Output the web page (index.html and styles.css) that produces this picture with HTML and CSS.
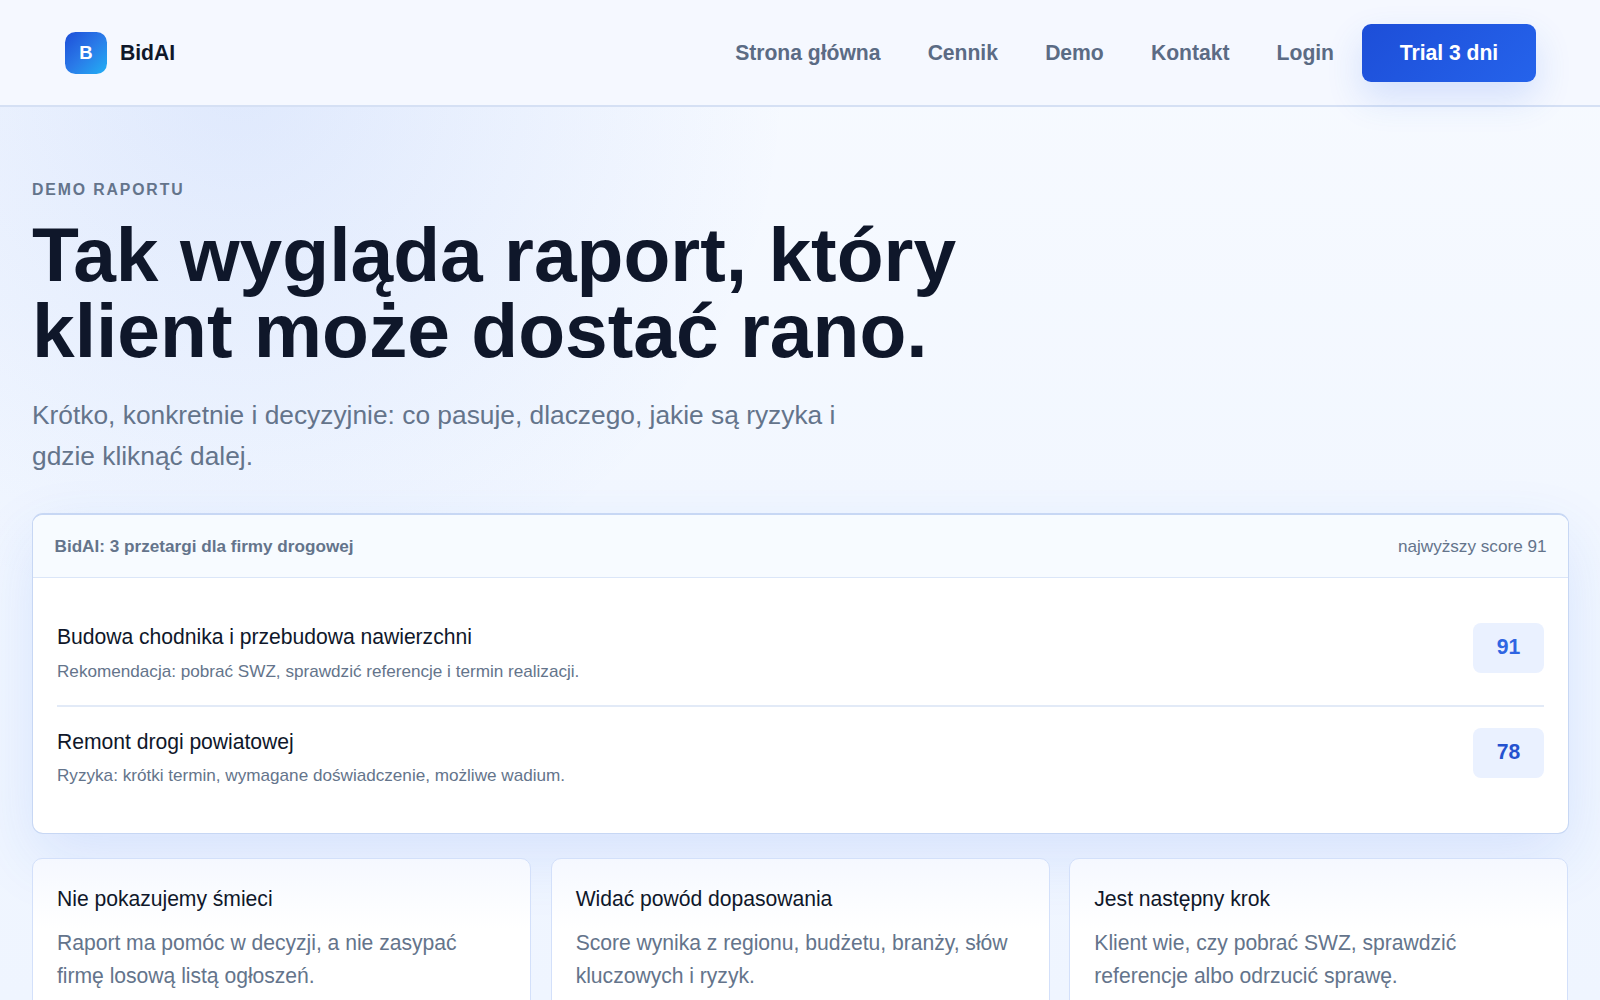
FILE: index.html
```html
<!DOCTYPE html>
<html lang="pl">
<head>
<meta charset="utf-8">
<title>BidAI – Demo raportu</title>
<link rel="stylesheet" href="styles.css">
</head>
<body>
<header class="topbar">
  <a class="brand"><span class="brand-mark">B</span><span>BidAI</span></a>
  <nav class="nav">
    <div class="nav-links">
      <a>Strona główna</a>
      <a>Cennik</a>
      <a>Demo</a>
      <a>Kontakt</a>
      <a>Login</a>
    </div>
    <a class="button">Trial 3 dni</a>
  </nav>
</header>
<main class="page">
  <section class="hero">
    <p class="eyebrow">DEMO RAPORTU</p>
    <h1>Tak wygląda raport, który klient może dostać rano.</h1>
    <p class="lead">Krótko, konkretnie i decyzyjnie: co pasuje, dlaczego, jakie są ryzyka i gdzie kliknąć dalej.</p>
  </section>
  <section class="report">
    <div class="report-head">
      <strong>BidAI: 3 przetargi dla firmy drogowej</strong>
      <span>najwyższy score 91</span>
    </div>
    <div class="report-body">
      <div class="row">
        <div>
          <h3>Budowa chodnika i przebudowa nawierzchni</h3>
          <p>Rekomendacja: pobrać SWZ, sprawdzić referencje i termin realizacji.</p>
        </div>
        <span class="score">91</span>
      </div>
      <div class="row">
        <div>
          <h3>Remont drogi powiatowej</h3>
          <p>Ryzyka: krótki termin, wymagane doświadczenie, możliwe wadium.</p>
        </div>
        <span class="score score-mid">78</span>
      </div>
    </div>
  </section>
  <section class="cards">
    <article class="card">
      <h3>Nie pokazujemy śmieci</h3>
      <p>Raport ma pomóc w decyzji, a nie zasypać firmę losową listą ogłoszeń.</p>
    </article>
    <article class="card">
      <h3>Widać powód dopasowania</h3>
      <p>Score wynika z regionu, budżetu, branży, słów kluczowych i ryzyk.</p>
    </article>
    <article class="card">
      <h3>Jest następny krok</h3>
      <p>Klient wie, czy pobrać SWZ, sprawdzić referencje albo odrzucić sprawę.</p>
    </article>
  </section>
</main>
</body>
</html>
```
FILE: styles.css
```css
* { box-sizing: border-box; }
html { height: 100%; overflow: hidden; }
body {
  margin: 0;
  height: 1000px;
  overflow: hidden;
  font-family: "Liberation Sans", Arial, sans-serif;
  font-size: 21.15px;
  line-height: 32.8px;
  letter-spacing: -.03px;
  color: #0f172a;
  background:
    radial-gradient(circle at 240px 80px, rgba(37, 99, 235, .11), rgba(37, 99, 235, 0) 550px),
    linear-gradient(180deg, #f7faff 0%, #f2f7ff 50%, #eff5ff 100%);
}
h1, h3, p { margin: 0; }

.topbar {
  display: flex;
  align-items: center;
  justify-content: space-between;
  height: 107px;
  padding: 0 64px 0 65px;
  border-bottom: 2px solid #d5e0f4;
  background: #f5f8ff;
  font-weight: 700;
  line-height: 34px;
}
.brand { display: flex; align-items: center; gap: 13px; }
.brand-mark {
  display: grid;
  place-items: center;
  width: 42px;
  height: 42px;
  border-radius: 10.5px;
  background: linear-gradient(135deg, #1d4ed8, #2a7ae8 50%, #22b0f5);
  color: #fff;
  font-size: 18.5px;
  padding-top: 1px;
}
.nav { display: flex; align-items: center; gap: 28px; }
.nav-links { display: flex; gap: 47.2px; color: #5b6b84; }
.button {
  display: grid;
  place-items: center;
  width: 174px;
  height: 58px;
  border-radius: 9px;
  background: linear-gradient(135deg, #1d4ed8, #2563eb);
  box-shadow: 0 16px 36px rgba(37, 99, 235, .16);
  color: #fff;
}

.page { padding: 70.5px 31.5px 0 32px; }
.hero { padding-bottom: 36.5px; }
.eyebrow {
  font-size: 15.8px;
  line-height: 24.5px;
  font-weight: 700;
  letter-spacing: 1.88px;
  color: #64748b;
}
h1 {
  max-width: 1000px;
  margin-top: 15px;
  font-size: 76.75px;
  line-height: 76.3px;
  letter-spacing: 0;
}
.lead {
  max-width: 840px;
  margin-top: 25.5px;
  font-size: 26.33px;
  line-height: 40.8px;
  letter-spacing: 0;
  color: #64748b;
}

.report {
  overflow: hidden;
  height: 321px;
  border: 1.5px solid #c7d7f4;
  border-top-width: 2px;
  border-radius: 11px;
  background: #fff;
  box-shadow: 0 24px 64px rgba(37, 99, 235, .12);
}
.report-head {
  display: flex;
  align-items: center;
  justify-content: space-between;
  height: 62.5px;
  padding: 0 21px 0 21.5px;
  border-bottom: 1px solid #dbe6f8;
  background: #f7fbff;
  color: #64748b;
  font-size: 17.15px;
  letter-spacing: 0;
}
.report-body { padding: 24.5px 23.5px 24px 24px; }
.row {
  display: flex;
  justify-content: space-between;
  align-items: flex-start;
  height: 103px;
  padding: 21px 0;
}
.row + .row { border-top: 2px solid #e2eaf7; }
h3 { font-size: 21.15px; line-height: 27.5px; font-weight: 400; }
.row p {
  margin-top: 7.5px;
  font-size: 17.15px;
  line-height: 26.5px;
  letter-spacing: -.01px;
  color: #64748b;
}
.row + .row p { margin-top: 6px; }
.score {
  display: grid;
  place-items: center;
  width: 71px;
  height: 50px;
  padding-bottom: 1px;
  border-radius: 8px;
  background: #eaf1ff;
  color: #2f65e2;
  font-weight: 700;
}
.score-mid { color: #2552cf; }

.cards {
  display: grid;
  grid-template-columns: repeat(3, 1fr);
  gap: 19.5px;
  margin-top: 24px;
}
.card {
  height: 180px;
  padding: 25.5px 24px;
  border: 1px solid #d3e0fa;
  border-radius: 10px;
  background: linear-gradient(180deg, #f5f8ff 0, #fff 70px);
}
.card p { margin-top: 15px; color: #64748b; }
```
